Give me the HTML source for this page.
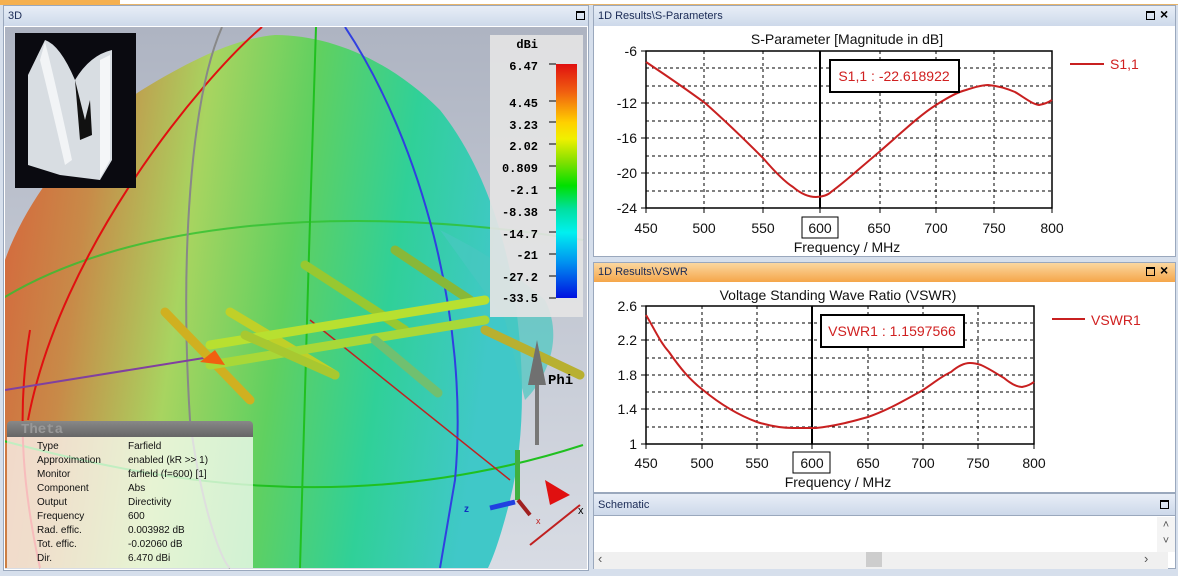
<!DOCTYPE html>
<html><head><meta charset="utf-8"><style>
*{margin:0;padding:0;box-sizing:border-box}
body{width:1178px;height:576px;background:#d6dfec;position:relative;overflow:hidden;font-family:"Liberation Sans",sans-serif}
.abs{position:absolute}
.tb{position:absolute;font-size:11px;color:#1a2a55;padding-left:4px;line-height:20px}
.blue{background:linear-gradient(#e8eef7,#cdd9ea)}
.orange{background:linear-gradient(#fbd7a0,#f5a64a)}
.mx{position:absolute;width:9px;height:9px;border:1.5px solid #000;border-top-width:2.5px}
.cb{font-family:"Liberation Mono",monospace;font-weight:bold;font-size:12px;position:absolute;text-align:right}
.info div{position:absolute;font-size:10px;color:#111}
</style></head><body>
<div class="abs" style="left:0;top:0;width:120px;height:5px;background:#f5b050"></div>
<div class="abs" style="left:120px;top:0;width:1058px;height:5px;background:#fff;border-bottom:1px solid #e7b46a"></div>

<!-- 3D panel -->
<div class="abs" style="left:3px;top:5px;width:586px;height:566px;background:#fff;border:1px solid #9aa8bd"></div>
<div class="tb blue" style="left:4px;top:6px;width:584px;height:20px">3D</div>
<div class="mx" style="left:576px;top:11px"></div>
<svg class="abs" style="left:5px;top:27px" width="582" height="542" viewBox="5 27 582 542">
<defs>
<linearGradient id="g" x1="0" x2="1" y1="0" y2="0.15">
<stop offset="0" stop-color="#d8603a"/><stop offset="0.2" stop-color="#c88a48"/><stop offset="0.4" stop-color="#a8d460"/><stop offset="0.6" stop-color="#60d060"/><stop offset="0.8" stop-color="#30d098"/><stop offset="1" stop-color="#40c8c8"/>
</linearGradient>
<linearGradient id="bg" x1="0" x2="0" y1="0" y2="1"><stop offset="0" stop-color="#aeb4c2"/><stop offset="1" stop-color="#d8dce4"/></linearGradient>
</defs>
<rect x="5" y="27" width="582" height="542" fill="url(#bg)"/>
<path d="M5 568 L5 260 C30 190 90 120 150 85 C200 55 240 38 275 35 C330 35 390 60 440 110 C480 160 505 230 515 300 C525 370 525 440 510 500 C500 540 492 560 488 568 Z" fill="url(#g)"/>
<path d="M440 230 C480 250 505 265 545 300 C565 340 545 380 525 400 L505 320 Z" fill="#48c8c0" opacity="0.7"/>
<path d="M0 300 C120 225 330 200 583 240" stroke="#30c030" stroke-width="2" fill="none" opacity="0.8"/>
<path d="M0 440 C150 480 350 520 583 445" stroke="#20c020" stroke-width="2" fill="none"/>
<path d="M262 27 C200 80 60 250 28 420" stroke="#e01010" stroke-width="2" fill="none"/>
<path d="M40 568 C25 500 15 420 30 330" stroke="#e01010" stroke-width="2" fill="none"/>
<path d="M222 27 C190 100 180 260 190 420 C200 500 220 560 230 568" stroke="#888" stroke-width="2" fill="none"/>
<path d="M316 27 C310 200 305 400 300 568" stroke="#20c020" stroke-width="2" fill="none"/>
<path d="M345 27 C420 140 470 320 455 480 L440 568" stroke="#3040e0" stroke-width="2" fill="none"/>
<path d="M5 390 L210 357" stroke="#8040a0" stroke-width="2"/>
<path d="M310 320 L510 480" stroke="#c02020" stroke-width="1.5"/>
<path d="M530 545 L580 505" stroke="#c02020" stroke-width="2" fill="none"/>
<g stroke-linecap="round" fill="none">
<path d="M165 312 L250 400" stroke="#d0b020" stroke-width="9"/>
<path d="M230 312 L335 375" stroke="#c0d028" stroke-width="9"/>
<path d="M305 265 L405 330" stroke="#98c830" stroke-width="9"/>
<path d="M395 250 L470 300" stroke="#88b838" stroke-width="9"/>
<path d="M485 330 L580 375" stroke="#b8b030" stroke-width="9"/>
<path d="M210 345 L485 300" stroke="#b8e030" stroke-width="9"/>
<path d="M210 365 L485 320" stroke="#a8d838" stroke-width="9"/>
<path d="M245 335 L335 375" stroke="#a8c830" stroke-width="9"/>
<path d="M375 340 L438 393" stroke="#70c070" stroke-width="9"/>
</g>
<path d="M200 362 L215 350 L225 365 Z" fill="#f06010"/>
<path d="M537 340 L528 385 L546 385 Z" fill="#707070"/><rect x="535" y="385" width="4" height="60" fill="#777"/>
<rect x="515" y="450" width="5" height="50" fill="#40b040"/>
<path d="M490 508 L515 502" stroke="#2040e0" stroke-width="5"/>
<path d="M518 500 L530 515" stroke="#a02020" stroke-width="4"/>
<path d="M545 480 L570 495 L550 505 Z" fill="#e01010"/>
<text x="548" y="384" font-family="Liberation Mono" font-weight="bold" font-size="14">Phi</text>
<text x="464" y="512" font-size="10" fill="#1030c0" font-weight="bold">z</text>
<text x="578" y="514" font-size="11">x</text>
<text x="536" y="524" font-size="9" fill="#c02020">x</text>
<rect x="15" y="33" width="121" height="155" fill="#0a0a10"/>
<path d="M28 75 L45 40 Q60 45 75 80 Q90 55 112 50 L112 160 L100 180 L60 175 L28 165 Z" fill="#d8dde2"/>
<path d="M45 42 Q55 80 72 160 L65 165 Q50 100 40 60 Z" fill="#f2f4f6"/>
<path d="M75 80 L85 120 L90 100 L92 135 L80 140 Z" fill="#111"/>
<path d="M100 60 L110 55 L110 160 L100 178 Z" fill="#f4f6f8"/>
<rect x="490" y="35" width="93" height="282" fill="#e4e4e4" opacity="0.92"/>
<defs><linearGradient id="cbg" x1="0" x2="0" y1="0" y2="1">
<stop offset="0" stop-color="#e01010"/><stop offset="0.12" stop-color="#f06010"/><stop offset="0.25" stop-color="#ffd000"/><stop offset="0.32" stop-color="#f0f000"/><stop offset="0.42" stop-color="#80e000"/><stop offset="0.52" stop-color="#00e000"/><stop offset="0.62" stop-color="#00e0a0"/><stop offset="0.72" stop-color="#00f0f0"/><stop offset="0.85" stop-color="#0090f0"/><stop offset="1" stop-color="#0010e0"/>
</linearGradient></defs>
<rect x="556" y="64" width="21" height="234" fill="url(#cbg)"/>
<g stroke="#000" stroke-width="1"><path d="M549 64H556M549 101H556M549 122H556M549 144H556M549 166H556M549 188H556M549 210H556M549 232H556M549 254H556M549 276H556M549 298H556"/></g>
</svg>
<div class="cb" style="left:500px;width:38px;top:38px">dBi</div>
<div class="cb" style="left:490px;width:48px;top:60px">6.47</div>
<div class="cb" style="left:490px;width:48px;top:97px">4.45</div>
<div class="cb" style="left:490px;width:48px;top:119px">3.23</div>
<div class="cb" style="left:490px;width:48px;top:140px">2.02</div>
<div class="cb" style="left:490px;width:48px;top:162px">0.809</div>
<div class="cb" style="left:490px;width:48px;top:184px">-2.1</div>
<div class="cb" style="left:490px;width:48px;top:206px">-8.38</div>
<div class="cb" style="left:490px;width:48px;top:228px">-14.7</div>
<div class="cb" style="left:490px;width:48px;top:249px">-21</div>
<div class="cb" style="left:490px;width:48px;top:271px">-27.2</div>
<div class="cb" style="left:490px;width:48px;top:292px">-33.5</div>
<div class="abs" style="left:7px;top:421px;width:246px;height:16px;background:linear-gradient(#888,#666);border-radius:4px 4px 0 0;font-family:'Liberation Mono';font-weight:bold;font-size:14px;color:#999;padding-left:14px;line-height:18px">Theta</div>
<div class="abs info" style="left:7px;top:437px;width:246px;height:131px;background:rgba(255,255,255,0.72)">
<div style="left:30px;top:4px">Type</div><div style="left:121px;top:4px">Farfield</div>
<div style="left:30px;top:18px">Approximation</div><div style="left:121px;top:18px">enabled (kR &gt;&gt; 1)</div>
<div style="left:30px;top:32px">Monitor</div><div style="left:121px;top:32px">farfield (f=600) [1]</div>
<div style="left:30px;top:46px">Component</div><div style="left:121px;top:46px">Abs</div>
<div style="left:30px;top:60px">Output</div><div style="left:121px;top:60px">Directivity</div>
<div style="left:30px;top:74px">Frequency</div><div style="left:121px;top:74px">600</div>
<div style="left:30px;top:88px">Rad. effic.</div><div style="left:121px;top:88px">0.003982 dB</div>
<div style="left:30px;top:102px">Tot. effic.</div><div style="left:121px;top:102px">-0.02060 dB</div>
<div style="left:30px;top:116px">Dir.</div><div style="left:121px;top:116px">6.470 dBi</div>
</div>

<div class="abs" style="left:593px;top:5px;width:583px;height:252px;background:#fff;border:1px solid #9aa8bd"></div>
<div class="tb blue" style="left:594px;top:6px;width:581px;height:20px">1D Results\S-Parameters</div>
<div class="mx" style="left:1146px;top:11px"></div><div class="abs" style="left:1160px;top:6px;font-size:14px;font-weight:bold">×</div>
<svg class="abs" style="left:0;top:0" width="1178" height="576">
<g font-family="Liberation Sans" font-size="14" fill="#111">
<text x="847" y="44" text-anchor="middle">S-Parameter [Magnitude in dB]</text>
<g stroke="#000" stroke-dasharray="3,3" stroke-width="1">
<path d="M704 51V208M763 51V208M880 51V208M936 51V208M994 51V208M646 68H1052M646 86H1052M646 103H1052M646 121H1052M646 138H1052M646 156H1052M646 173H1052M646 191H1052"/>
</g>
<rect x="646" y="51" width="406" height="157" fill="none" stroke="#000" stroke-width="1.5"/>
<path d="M820 51V208" stroke="#000" stroke-width="2"/>
<g stroke="#000"><path d="M646 208v5M704 208v5M763 208v5M820 208v5M880 208v5M936 208v5M994 208v5M1052 208v5M641 51h5M641 103h5M641 138h5M641 173h5M641 208h5"/></g>
<text x="637" y="56" text-anchor="end">-6</text><text x="637" y="108" text-anchor="end">-12</text><text x="637" y="143" text-anchor="end">-16</text><text x="637" y="178" text-anchor="end">-20</text><text x="637" y="213" text-anchor="end">-24</text>
<text x="646" y="233" text-anchor="middle">450</text><text x="704" y="233" text-anchor="middle">500</text><text x="763" y="233" text-anchor="middle">550</text><text x="820" y="233" text-anchor="middle">600</text><text x="879" y="233" text-anchor="middle">650</text><text x="936" y="233" text-anchor="middle">700</text><text x="994" y="233" text-anchor="middle">750</text><text x="1052" y="233" text-anchor="middle">800</text>
<rect x="802" y="217" width="36" height="21" fill="none" stroke="#000"/>
<text x="847" y="252" text-anchor="middle">Frequency / MHz</text>
<path d="M646 62 C670 78 690 92 705 103 C730 125 750 145 763 158 C775 172 785 182 793 187 C800 193 808 197 816 197 C822 197 828 195 831 192 C845 182 860 168 878 153 C900 134 920 115 936 105 C950 96 958 92 966 90 C975 87 982 85 988 85 C1000 86 1008 89 1015 92 C1025 98 1032 104 1039 105 C1045 104 1049 102 1052 100" fill="none" stroke="#c82020" stroke-width="2"/>
<rect x="830" y="60" width="129" height="32" fill="#fff" stroke="#000" stroke-width="2"/>
<text x="894" y="81" text-anchor="middle" fill="#d02020">S1,1 : -22.618922</text>
<path d="M1070 64H1104" stroke="#c82020" stroke-width="2"/>
<text x="1110" y="69" fill="#d02020">S1,1</text>
</g>
</svg>

<div class="abs" style="left:593px;top:262px;width:583px;height:231px;background:#fff;border:1px solid #9aa8bd"></div>
<div class="tb orange" style="left:594px;top:263px;width:581px;height:19px;line-height:19px">1D Results\VSWR</div>
<div class="mx" style="left:1146px;top:267px"></div><div class="abs" style="left:1160px;top:262px;font-size:14px;font-weight:bold">×</div>
<svg class="abs" style="left:0;top:0" width="1178" height="576">
<g font-family="Liberation Sans" font-size="14" fill="#111">
<text x="838" y="300" text-anchor="middle">Voltage Standing Wave Ratio (VSWR)</text>
<g stroke="#000" stroke-dasharray="3,3" stroke-width="1">
<path d="M702 306V444M757 306V444M868 306V444M923 306V444M978 306V444M646 323H1034M646 340H1034M646 358H1034M646 375H1034M646 392H1034M646 409H1034M646 427H1034"/>
</g>
<rect x="646" y="306" width="388" height="138" fill="none" stroke="#000" stroke-width="1.5"/>
<path d="M812 306V444" stroke="#000" stroke-width="2"/>
<g stroke="#000"><path d="M646 444v5M702 444v5M757 444v5M812 444v5M868 444v5M923 444v5M978 444v5M1034 444v5M641 306h5M641 340h5M641 375h5M641 409h5M641 444h5"/></g>
<text x="637" y="311" text-anchor="end">2.6</text><text x="637" y="345" text-anchor="end">2.2</text><text x="637" y="380" text-anchor="end">1.8</text><text x="637" y="414" text-anchor="end">1.4</text><text x="637" y="449" text-anchor="end">1</text>
<text x="646" y="468" text-anchor="middle">450</text><text x="702" y="468" text-anchor="middle">500</text><text x="757" y="468" text-anchor="middle">550</text><text x="812" y="468" text-anchor="middle">600</text><text x="868" y="468" text-anchor="middle">650</text><text x="923" y="468" text-anchor="middle">700</text><text x="978" y="468" text-anchor="middle">750</text><text x="1034" y="468" text-anchor="middle">800</text>
<rect x="793" y="452" width="37" height="21" fill="none" stroke="#000"/>
<text x="838" y="487" text-anchor="middle">Frequency / MHz</text>
<path d="M646 315 C655 330 660 342 669 352 C680 368 690 380 703 390 C720 404 738 415 757 422 C770 426 782 428 793 428 C800 428 808 428 816 428 C835 426 850 422 868 417 C888 410 905 400 923 390 C935 382 942 376 951 372 C958 366 964 363 970 363 C975 363 978 364 981 365 C990 369 997 374 1004 378 C1010 383 1016 387 1022 387 C1028 386 1031 384 1034 382" fill="none" stroke="#c82020" stroke-width="2"/>
<rect x="821" y="315" width="143" height="32" fill="#fff" stroke="#000" stroke-width="2"/>
<text x="892" y="336" text-anchor="middle" fill="#d02020">VSWR1 : 1.1597566</text>
<path d="M1052 319H1085" stroke="#c82020" stroke-width="2"/>
<text x="1091" y="325" fill="#d02020">VSWR1</text>
</g>
</svg>

<div class="abs" style="left:593px;top:493px;width:583px;height:76px;background:#fff;border:1px solid #9aa8bd"></div>
<div class="tb blue" style="left:594px;top:494px;width:581px;height:22px;line-height:22px;border-bottom:1px solid #9aa8bd">Schematic</div>
<div class="mx" style="left:1160px;top:500px"></div>
<div class="abs" style="left:594px;top:552px;width:574px;height:17px;background:#f0f0f0"></div>
<div class="abs" style="left:866px;top:552px;width:16px;height:15px;background:#cdcdcd"></div>
<div class="abs" style="left:1157px;top:517px;width:18px;height:35px;background:#f4f4f4;font-size:11px;text-align:center;color:#555;line-height:16px">˄<br>˅</div>
<div class="abs" style="left:598px;top:551px;font-size:13px;color:#555">‹</div>
<div class="abs" style="left:1144px;top:551px;font-size:13px;color:#555">›</div>
</body></html>
